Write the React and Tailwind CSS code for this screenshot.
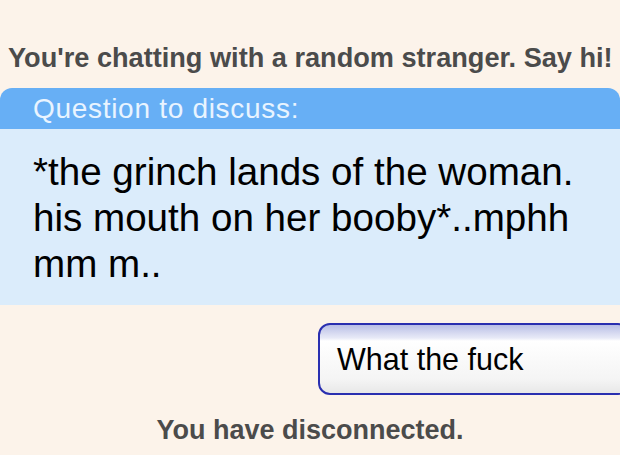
export default function App() {
  return (
    <div className="w-[620px] h-[455px] bg-[#fcf3ea] overflow-hidden flex flex-col" style={{ fontFamily: '"Liberation Sans", Arial, sans-serif' }}>
      <div className="h-[88px] pt-[40px] pl-[8px] text-[27.15px] font-bold text-[#4b4b4b] leading-[36px] whitespace-nowrap">
        You're chatting with a random stranger. Say hi!
      </div>
      <div className="h-[41px] rounded-t-[12px] bg-[#67aff5] pl-[33px] pt-[1px] text-[28px] tracking-[0.7px] text-[#e9f4ff] leading-[40px] whitespace-nowrap">
        Question to discuss:
      </div>
      <div className="h-[176px] bg-[#dbecfb] pl-[33px] pt-[20px] text-[38.6px] text-black leading-[46px] whitespace-nowrap">
        *the grinch lands of the woman.<br />his mouth on her booby*..mphh<br />mm m..
      </div>
      <div className="flex justify-end pt-[18px]">
        <div className="w-[312px] h-[72px] -mr-[10px] rounded-[12px] border-2 border-[#2a2fb0] bg-[linear-gradient(to_bottom,#b9bfe6_0px,#e8eaf7_13px,#ffffff_16px,#f4f4f4_55px,#e6e6e6_70px)] pl-[17px] text-[30.5px] text-black leading-[68px] whitespace-nowrap">
          What the fuck
        </div>
      </div>
      <div className="flex-1 flex justify-center pt-[20px]">
        <div className="text-[27px] font-bold text-[#4b4b4b] leading-[30px] whitespace-nowrap">You have disconnected.</div>
      </div>
    </div>
  );
}
